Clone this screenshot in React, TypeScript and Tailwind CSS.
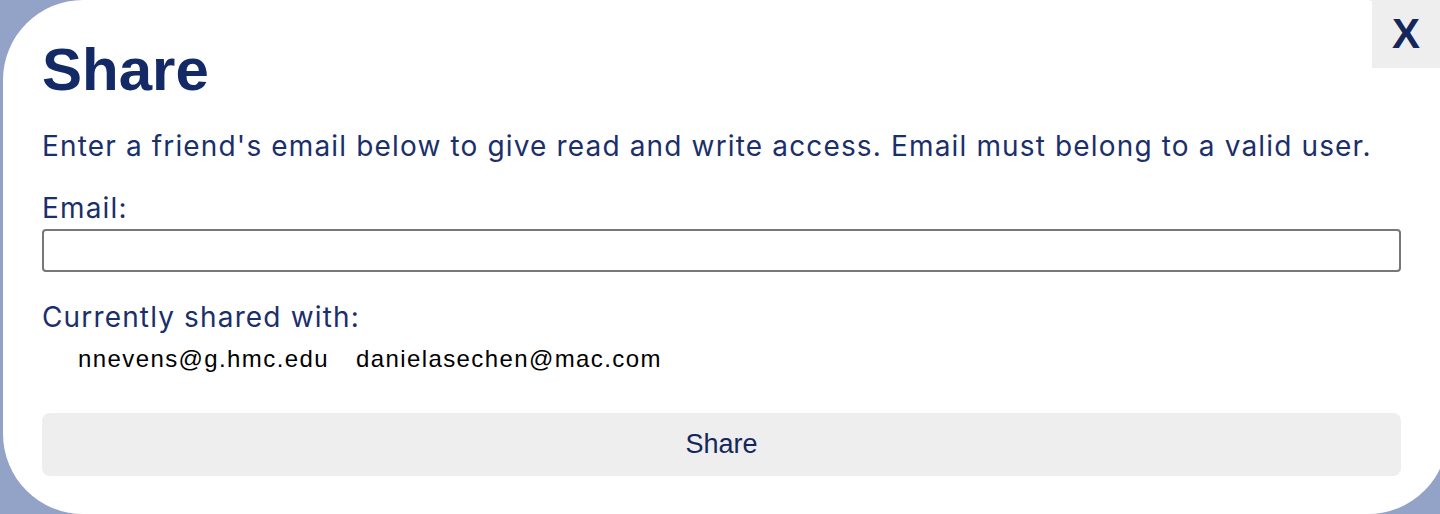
import React from "react";

const sharedWith = ["nnevens@g.hmc.edu", "danielasechen@mac.com"];

const ShareModal: React.FC = () => {
  return (
    <div className="relative h-[514px] w-[1445px] rounded-[80px] bg-white pl-[39px]">
      <button className="absolute right-[8px] top-0 flex h-[68px] w-[68px] items-center justify-center bg-[#eeeeee] font-['Liberation_Sans',Arial,sans-serif] text-[42px] font-bold leading-none text-[#13275c]">
        X
      </button>

      <div className="w-[1359px]">
        <h1 className="pt-[40px] font-['Liberation_Sans',Arial,sans-serif] text-[60px] font-bold leading-[60px] text-[#142a66]">
          Share
        </h1>
        <p className="mt-[30px] font-['Inter',sans-serif] text-[28px] leading-[32px] tracking-[1.15px] text-[#1b2f6b]">
          Enter a friend's email below to give read and write access. Email must belong to a valid user.
        </p>

        <label className="mt-[30px] block font-['Inter',sans-serif] text-[28px] leading-[32px] tracking-[1.15px] text-[#1b2f6b]">
          Email:
        </label>
        <input
          type="email"
          className="mt-[5px] block h-[43px] w-full rounded-[4px] border-2 border-[#777777] bg-white px-2 outline-none"
        />

        <p className="mt-[29px] font-['Inter',sans-serif] text-[28px] leading-[32px] tracking-[1.15px] text-[#1b2f6b]">
          Currently shared with:
        </p>
        <ul className="mt-[12px] flex gap-[27px] pl-[36px] font-['Liberation_Sans',Arial,sans-serif] text-[24px] leading-[28px] tracking-[1.4px] text-black">
          {sharedWith.map((email) => (
            <li key={email}>{email}</li>
          ))}
        </ul>

        <button className="mt-[40px] flex h-[63px] w-full items-center justify-center rounded-[8px] bg-[#eeeeee] font-['Liberation_Sans',Arial,sans-serif] text-[27px] text-[#13275c]">
          Share
        </button>
      </div>
    </div>
  );
};

export default function App() {
  return (
    <div className="h-[514px] w-full overflow-hidden bg-[#93a3c7] pl-[3px]">
      <ShareModal />
    </div>
  );
}
